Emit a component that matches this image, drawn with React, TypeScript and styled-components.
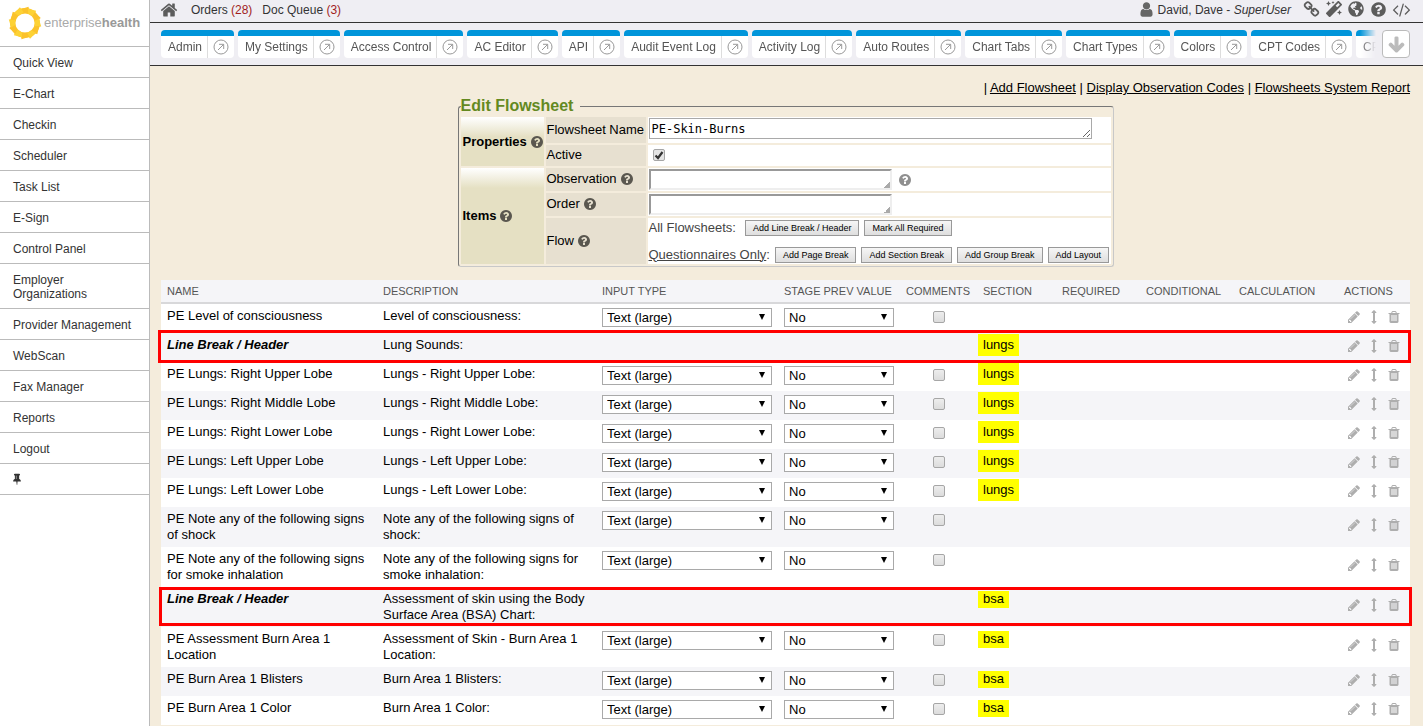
import React from "react";
import styled, { createGlobalStyle, css } from "styled-components";
import { FaMagic, FaGlobeAmericas, FaArrowDown } from "react-icons/fa";

const GlobalStyle = createGlobalStyle`
  *, *::before, *::after { box-sizing: border-box; }
  body {
    margin: 0;
    background: #f4ecdc;
    color: #000;
    font: 13px/16px "Liberation Sans", Arial, Helvetica, sans-serif;
  }
  input, select, textarea, button { margin: 0; font: inherit; color: inherit; }
`;

/* ---------- icons ---------- */

const paths = {
  home: "M1472 992v480q0 26-19 45t-45 19h-384v-384h-256v384h-384q-26 0-45-19t-19-45v-480q0-1 .5-3t.5-3l575-474 575 474q1 2 1 6zm223-69l-62 74q-8 9-21 11h-3q-13 0-21-7l-692-577-692 577q-12 8-24 7-13-2-21-11l-62-74q-8-10-7-23.5t11-21.5l719-599q32-26 76-26t76 26l244 204v-195q0-14 9-23t23-9h192q14 0 23 9t9 23v408l219 182q10 8 11 21.5t-7 23.5z",
  user: "M1536 1399q0 109-62.5 187t-150.5 78h-854q-88 0-150.5-78t-62.5-187q0-85 8.5-160.5t31.5-152 58.5-131 94-89 134.5-34.5q131 128 313 128t313-128q76 0 134.5 34.5t94 89 58.5 131 31.5 152 8.5 160.5zm-256-887q0 159-112.5 271.5t-271.5 112.5-271.5-112.5-112.5-271.5 112.5-271.5 271.5-112.5 271.5 112.5 112.5 271.5z",
  help: "M1024 1376v-192q0-14-9-23t-23-9h-192q-14 0-23 9t-9 23v192q0 14 9 23t23 9h192q14 0 23-9t9-23zm256-672q0-88-55.5-163t-138.5-116-170-41q-243 0-371 213-15 24 8 42l132 100q7 6 19 6 16 0 25-12 53-68 86-92 34-24 86-24 48 0 85.5 26t37.5 59q0 38-20 61t-68 45q-63 28-115.5 86.5t-52.5 125.5v36q0 14 9 23t23 9h192q14 0 23-9t9-23q0-19 21.5-49.5t54.5-49.5q32-18 49-28.5t46-35 44.5-48 28-60.5 12.5-81zm384 192q0 209-103 385.5t-279.5 279.5-385.5 103-385.5-103-279.5-279.5-103-385.5 103-385.5 279.5-279.5 385.5-103 385.5 103 279.5 279.5 103 385.5z",
  pencil: "M491 1536l91-91-235-235-91 91v107h128v128h107zm523-928q0-22-22-22-10 0-17 7l-542 542q-7 7-7 17 0 22 22 22 10 0 17-7l542-542q7-7 7-17zm-54-192l416 416-832 832h-416v-416zm683 96q0 53-37 90l-166 166-416-416 166-165q36-38 90-38 53 0 91 38l235 234q37 39 37 91z",
  move: "M1216 320q0 26-19 45t-45 19h-128v1024h128q26 0 45 19t19 45-19 45l-256 256q-19 19-45 19t-45-19l-256-256q-19-19-19-45t19-45 45-19h128v-1024h-128q-26 0-45-19t-19-45 19-45l256-256q19-19 45-19t45 19l256 256q19 19 19 45z",
  trash: "M704 1376v-704q0-14-9-23t-23-9h-64q-14 0-23 9t-9 23v704q0 14 9 23t23 9h64q14 0 23-9t9-23zm256 0v-704q0-14-9-23t-23-9h-64q-14 0-23 9t-9 23v704q0 14 9 23t23 9h64q14 0 23-9t9-23zm256 0v-704q0-14-9-23t-23-9h-64q-14 0-23 9t-9 23v704q0 14 9 23t23 9h64q14 0 23-9t9-23zm-544-992h448l-48-117q-7-9-17-11h-317q-10 2-17 11zm928 32v64q0 14-9 23t-23 9h-96v948q0 83-47 143.500t-113 60.500h-832q-66 0-113-58.500t-47-141.500v-952h-96q-14 0-23-9t-9-23v-64q0-14 9-23t23-9h309l70-167q15-37 54-63t79-26h320q40 0 79 26t54 63l70 167h309q14 0 23 9t9 23z",
  pin: "M800 864v-448q0-14-9-23t-23-9-23 9-9 23v448q0 14 9 23t23 9 23-9 9-23zm672 352q0 26-19 45t-45 19h-429l-51 483q-2 12-10.500 20.500t-20.500 8.500h-1q-27 0-32-27l-76-485h-404q-26 0-45-19t-19-45q0-123 78.500-221.500t177.500-98.500v-512q-52 0-90-38t-38-90 38-90 90-38h640q52 0 90 38t38 90-38 90-90 38v512q99 0 177.500 98.500t78.500 221.500z",
  link: "M1520 1216q0-40-28-68l-208-208q-28-28-68-28-42 0-72 32 3 3 19 18.500t21.500 21.500 15 19 13 25.500 3.500 27.500q0 40-28 68t-68 28q-15 0-27.500-3.500t-25.500-13-19-15-21.500-21.500-18.500-19q-33 31-33 73 0 40 28 68l206 207q27 27 68 27 40 0 68-26l147-146q28-28 28-67zm-703-705q0-40-28-68l-206-207q-28-28-68-28-39 0-68 27l-147 146q-28 28-28 67 0 40 28 68l208 208q27 27 68 27 42 0 72-31-3-3-19-18.500t-21.500-21.500-15-19-13-25.500-3.500-27.500q0-40 28-68t68-28q15 0 27.500 3.500t25.500 13 19 15 21.500 21.500 18.500 19q33-31 33-73zm895 705q0 120-85 203l-147 146q-83 83-203 83-121 0-204-85l-206-207q-83-83-83-203 0-123 88-209l-88-88q-86 88-208 88-120 0-204-84l-208-208q-84-84-84-204t85-203l147-146q83-83 203-83 121 0 204 85l206 207q83 83 83 203 0 123-88 209l88 88q86-88 208-88 120 0 204 84l208 208q84 84 84 204z",
  code: "M553 1399l-50 50q-10 10-23 10t-23-10l-466-466q-10-10-10-23t10-23l466-466q10-10 23-10t23 10l50 50q10 10 10 23t-10 23l-393 393 393 393q10 10 10 23t-10 23zm591-1067l-373 1291q-4 13-15.500 19.500t-23.500 2.500l-62-17q-13-4-19.500-15.500t-2.500-24.500l373-1291q4-13 15.500-19.500t23.500-2.500l62 17q13 4 19.500 15.500t2.500 24.500zm657 651l-466 466q-10 10-23 10t-23-10l-50-50q-10-10-10-23t10-23l393-393-393-393q-10-10-10-23t10-23l50-50q10-10 23-10t23 10l466 466q10 10 10 23t-10 23z",
};

const IconSvg = styled.svg`
  display: block;
  flex: none;
  overflow: visible;
  fill: currentColor;
`;

function Icon({ name, size = 14 }: { name: keyof typeof paths; size?: number }) {
  return (
    <IconSvg width={size} height={size} viewBox="0 0 1792 1792" aria-hidden="true">
      <path d={paths[name]} />
    </IconSvg>
  );
}

function OpenIcon() {
  return (
    <svg width="16" height="16" viewBox="0 0 16 16" fill="none" stroke="#999" aria-hidden="true">
      <circle cx="8" cy="8" r="7" />
      <path d="M5 11l5.500-5.500M6 5.300h4.700V10" />
    </svg>
  );
}

function SunLogo() {
  const blades = Array.from({ length: 12 }, (_, i) => i * 30);
  return (
    <svg width="34" height="34" viewBox="-17 -17 34 34" aria-hidden="true">
      <circle r="12.300" fill="none" stroke="#fcc92f" strokeWidth="5.400" />
      {blades.map((a) => (
        <path key={a} transform={`rotate(${a})`} d="M-4.500 -13.800L3.500 -16.200L4.300 -10L-2 -9.800Z" fill={a % 60 ? "#fdd235" : "#fbc22b"} />
      ))}
    </svg>
  );
}

/* ---------- shell ---------- */

const Shell = styled.div`
  display: flex;
  min-height: 100vh;
`;

const Sidebar = styled.nav`
  flex: none;
  width: 150px;
  background: #fff;
  border-right: 1px solid #bbb;
  color: #333;
  font-size: 12px;
  line-height: 14px;
`;

const Brand = styled.a`
  display: flex;
  align-items: center;
  gap: 2px;
  height: 47px;
  padding: 0 0 1px 8px;
  border-bottom: 1px solid #bbb;
  color: #a9a9a9;
  font-size: 13px;
  text-decoration: none;

  strong { color: #999; }
`;

const SideLink = styled.a`
  display: block;
  padding: 9px 50px 7px 13px;
  border-bottom: 1px solid #bbb;
  color: inherit;
  text-decoration: none;
  white-space: ${(p: { $wrap?: boolean }) => (p.$wrap ? "normal" : "nowrap")};
`;

const PinButton = styled.button`
  display: block;
  width: 100%;
  height: 31px;
  padding: 0 0 0 11px;
  border: 0;
  border-bottom: 1px solid #bbb;
  background: none;
`;

const Main = styled.div`
  flex: 1;
  min-width: 0;
`;

const TopBar = styled.header`
  display: flex;
  align-items: center;
  height: 23px;
  padding: 0 13px 3px 10px;
  border-bottom: 1px solid #333;
  background: #efeef3;
  color: #333;
  font-size: 12px;
`;

const TopLink = styled.a`
  margin-left: 10px;
  color: inherit;
  text-decoration: none;

  span { color: #a11d1d; }
  &:first-child { margin: 0 3px 0 0; color: #5c5c5c; }
`;

const UserName = styled.span`
  display: flex;
  align-items: center;
  gap: 3px;
  margin: 0 12px 0 auto;

  svg { color: #666; }
`;

const Tools = styled.div`
  display: flex;
  gap: 6px;
`;

const ToolButton = styled.button`
  display: flex;
  padding: 0;
  border: 0;
  background: none;
  color: #5c5c5c;
`;

const TabBar = styled.div`
  display: flex;
  align-items: center;
  gap: 6px;
  height: 43px;
  padding: 0 13px 0 11px;
  border-bottom: 1px solid #333;
  background: #efeef3;
`;

const TabStrip = styled.div`
  display: flex;
  flex: 1;
  gap: 4px;
  min-width: 0;
  overflow: hidden;
  mask-image: linear-gradient(to right, #000 calc(100% - 16px), transparent);
`;

const Tab = styled.div`
  display: flex;
  flex: none;
  height: 28px;
  border-top: 6px solid #0095da;
  border-radius: 4px;
  background: #fff;
  color: #555;
  font-size: 12px;
  line-height: 22px;

  a { color: inherit; text-decoration: none; }
`;

const TabLabel = styled.a`
  padding: 0 5px 0 7px;
`;

const TabOpen = styled.a`
  display: flex;
  align-items: center;
  justify-content: center;
  width: 27px;
  border-left: 1px solid #ddd;
`;

const MoreButton = styled.button`
  display: flex;
  flex: none;
  align-items: center;
  justify-content: center;
  width: 28px;
  height: 28px;
  padding: 0;
  border: 1px solid #bbb;
  border-radius: 4px;
  background: #fff;
  color: #bbb;

  svg { stroke: currentColor; stroke-width: 40px; }
`;

const Content = styled.main`
  padding: 14px 13px 0 11px;
`;

const PageLinks = styled.div`
  text-align: right;

  a { color: inherit; }
`;

/* ---------- edit form ---------- */

const EditBox = styled.fieldset`
  width: fit-content;
  margin: 2px auto 13px;
  padding: 0 2px 2px;
  border: 1px solid;
  border-color: #777 #c8c8c8 #c8c8c8 #777;
  border-radius: 3px;

  legend {
    padding: 0 7px 0 0;
    color: #63891f;
    font-size: 16px;
    font-weight: bold;
    line-height: 16px;
  }
`;

const FormGrid = styled.div`
  display: grid;
  grid-template-columns: 83px 100px 463px;
  grid-template-rows: 26px 21px 23px 23px 46px;
  gap: 2px;
  padding-top: 3px;
`;

const cell = css`
  display: flex;
  align-items: center;
  gap: 3px;
  white-space: nowrap;
`;

const GroupCell = styled.div<{ $rows: number }>`
  ${cell}
  grid-row: span ${(p) => p.$rows};
  padding-left: 2px;
  background: linear-gradient(#fff, #e5e0c3 20px);
  font-weight: bold;
`;

const LabelCell = styled.label`
  ${cell}
  padding: 0 0 1px 1px;
  background: #e7e0d0;
`;

const ValueCell = styled.div<{ $top?: boolean }>`
  ${cell}
  align-items: ${(p) => (p.$top ? "flex-start" : "center")};
  gap: 6px;
  padding: ${(p) => (p.$top ? "1px 0 0 1px" : "0 0 0 1px")};
  background: #fff;
`;

const FlowCell = styled.div`
  display: flex;
  flex-direction: column;
  justify-content: space-between;
  padding-left: 1px;
  background: #fff;
  color: #444;
`;

const FlowLine = styled.div<{ $wide?: boolean }>`
  display: flex;
  align-items: center;
  gap: 5px;
  height: 19px;
  white-space: nowrap;

  & > span { margin-right: ${(p) => (p.$wide ? "4px" : "0")}; }
`;

const HelpButton = styled.button<{ $light?: boolean }>`
  display: flex;
  padding: 0;
  border: 0;
  background: none;
  color: ${(p) => (p.$light ? "#8f8f8f" : "#5a574f")};
`;

const NameArea = styled.textarea`
  display: block;
  width: 443px;
  height: 21px;
  padding: 2px;
  overflow: hidden;
  border: 1px solid #a9a9a9;
  background: #fff;
  font: 12px/17px "DejaVu Sans Mono", monospace;
`;

const SearchArea = styled.textarea`
  display: block;
  width: 243px;
  height: 21px;
  padding: 1px;
  overflow: hidden;
  border: 2px solid;
  border-color: #999 #eee #eee #999;
  background: linear-gradient(135deg, transparent 50%, #aaa 50%) right bottom / 6px 6px no-repeat #fff;
  resize: none;
`;

const SmallButton = styled.button`
  height: 16px;
  padding: 0 7px;
  border: 1px solid #999;
  background: linear-gradient(#f6f6f6, #dedede);
  color: #000;
  font-size: 9px;
  line-height: 12px;
`;

const Check = styled.input.attrs({ type: "checkbox" })`
  appearance: none;
  display: block;
  width: 12px;
  height: 12px;
  border: 1px solid #a6a6a6;
  border-radius: 2px;
  background: linear-gradient(#ededed, #dcdcdc);

  &:checked {
    background: url("data:image/svg+xml,%3Csvg xmlns='http://www.w3.org/2000/svg' viewBox='0 0 10 10'%3E%3Cpath d='M1.500 5.500L4 8L8.500 2' fill='none' stroke='%23333' stroke-width='2.200'/%3E%3C/svg%3E") center / 10px no-repeat #e4e4e4;
  }
`;

const ActiveCell = styled(ValueCell)`
  padding: 0 0 1px 5px;
`;

/* ---------- flowsheet table ---------- */

const Sheet = styled.table`
  width: 100%;
  table-layout: fixed;
  border-collapse: separate;
  border-spacing: 0;
  background: #fff;

  th {
    height: 24px;
    padding: 0 6px;
    border-bottom: 2px solid #d8d8da;
    background: #f5f5f8;
    color: #555;
    font-size: 11px;
    font-weight: normal;
    text-align: left;
    white-space: nowrap;
  }

  td {
    height: 29px;
    padding: 4px 6px;
    vertical-align: top;
  }

  tbody tr:nth-child(even) { background: #f5f5f8; }
`;

const Row = styled.tr<{ $boxed?: "above" | "within" }>`
  position: relative;

  ${(p) =>
    p.$boxed &&
    css`
      &::after {
        content: "";
        position: absolute;
        inset: ${p.$boxed === "above" ? "-3px -1px -1px -3px" : "0 -2px 1px -2px"};
        border: 3px solid #f00;
        pointer-events: none;
      }
    `}
`;

const BreakName = styled.td`
  font-weight: bold;
  font-style: italic;
`;

const SelectWrap = styled.span`
  position: relative;
  display: block;

  &::after {
    content: "";
    position: absolute;
    top: 6px;
    right: 7px;
    border: solid transparent;
    border-width: 6px 3px 0;
    border-top-color: #000;
    pointer-events: none;
  }
`;

const Select = styled.select`
  appearance: none;
  display: block;
  width: 100%;
  height: 19px;
  padding: 0 4px;
  border: 1px solid #a9a9a9;
  border-radius: 0;
  background: #fff;
  line-height: 17px;
`;

const CheckCell = styled.td`
  && { padding: 7px 0 0 33px; }
`;

const Section = styled.span<{ $tall: boolean }>`
  display: block;
  width: fit-content;
  margin: ${(p) => (p.$tall ? "-3px 0 -3px -5px" : "0 0 -1px -5px")};
  padding: ${(p) => (p.$tall ? "3px 5px" : "0 5px 1px")};
  background: #ff0;
`;

const ActionCell = styled.td`
  && {
    padding: 0 0 4px 9px;
    vertical-align: middle;
  }
`;

const Actions = styled.div`
  display: flex;
  gap: 6px;
`;

const ActionButton = styled.button`
  display: flex;
  padding: 0;
  border: 0;
  background: none;
  color: #aeaeae;
`;

/* ---------- data ---------- */

const sideLinks = [
  "Quick View", "E-Chart", "Checkin", "Scheduler", "Task List", "E-Sign", "Control Panel",
  "Employer Organizations", "Provider Management", "WebScan", "Fax Manager", "Reports", "Logout",
];

const tabs = [
  "Admin", "My Settings", "Access Control", "AC Editor", "API", "Audit Event Log", "Activity Log",
  "Auto Routes", "Chart Tabs", "Chart Types", "Colors", "CPT Codes", "CP",
];

const columns: [string, number][] = [
  ["NAME", 216], ["DESCRIPTION", 219], ["INPUT TYPE", 182], ["STAGE PREV VALUE", 122], ["COMMENTS", 77],
  ["SECTION", 79], ["REQUIRED", 84], ["CONDITIONAL", 93], ["CALCULATION", 105], ["ACTIONS", 72],
];

type Item = { name: string; text: string; section?: string; boxed?: "above" | "within" };

const items: Item[] = [
  { name: "PE Level of consciousness", text: "Level of consciousness:" },
  { name: "Line Break / Header", text: "Lung Sounds:", section: "lungs", boxed: "above" },
  { name: "PE Lungs: Right Upper Lobe", text: "Lungs - Right Upper Lobe:", section: "lungs" },
  { name: "PE Lungs: Right Middle Lobe", text: "Lungs - Right Middle Lobe:", section: "lungs" },
  { name: "PE Lungs: Right Lower Lobe", text: "Lungs - Right Lower Lobe:", section: "lungs" },
  { name: "PE Lungs: Left Upper Lobe", text: "Lungs - Left Upper Lobe:", section: "lungs" },
  { name: "PE Lungs: Left Lower Lobe", text: "Lungs - Left Lower Lobe:", section: "lungs" },
  { name: "PE Note any of the following signs of shock", text: "Note any of the following signs of shock:" },
  { name: "PE Note any of the following signs for smoke inhalation", text: "Note any of the following signs for smoke inhalation:" },
  { name: "Line Break / Header", text: "Assessment of skin using the Body Surface Area (BSA) Chart:", section: "bsa", boxed: "within" },
  { name: "PE Assessment Burn Area 1 Location", text: "Assessment of Skin - Burn Area 1 Location:", section: "bsa" },
  { name: "PE Burn Area 1 Blisters", text: "Burn Area 1 Blisters:", section: "bsa" },
  { name: "PE Burn Area 1 Color", text: "Burn Area 1 Color:", section: "bsa" },
];

function Help({ light }: { light?: boolean }) {
  return (
    <HelpButton type="button" $light={light} aria-label="Help">
      <Icon name="help" />
    </HelpButton>
  );
}

function ItemRow({ item }: { item: Item }) {
  return (
    <Row $boxed={item.boxed}>
      {item.boxed ? <BreakName>{item.name}</BreakName> : <td>{item.name}</td>}
      <td>{item.text}</td>
      {item.boxed ? (
        <>
          <td />
          <td />
          <td />
        </>
      ) : (
        <>
          <td>
            <SelectWrap>
              <Select aria-label="Input type" defaultValue="large">
                <option value="large">Text (large)</option>
              </Select>
            </SelectWrap>
          </td>
          <td>
            <SelectWrap>
              <Select aria-label="Stage previous value" defaultValue="no">
                <option value="no">No</option>
                <option value="yes">Yes</option>
              </Select>
            </SelectWrap>
          </td>
          <CheckCell>
            <Check aria-label="Comments" />
          </CheckCell>
        </>
      )}
      <td>{item.section && <Section $tall={item.section === "lungs"}>{item.section}</Section>}</td>
      <td />
      <td />
      <td />
      <ActionCell>
        <Actions>
          <ActionButton type="button" aria-label="Edit"><Icon name="pencil" /></ActionButton>
          <ActionButton type="button" aria-label="Move"><Icon name="move" /></ActionButton>
          <ActionButton type="button" aria-label="Delete"><Icon name="trash" /></ActionButton>
        </Actions>
      </ActionCell>
    </Row>
  );
}

export default function App() {
  return (
    <Shell>
      <GlobalStyle />
      <Sidebar>
        <Brand href="#">
          <SunLogo />
          <span>enterprise<strong>health</strong></span>
        </Brand>
        {sideLinks.map((label) => (
          <SideLink key={label} href="#" $wrap={label.startsWith("Employer")}>{label}</SideLink>
        ))}
        <PinButton type="button" aria-label="Pin menu"><Icon name="pin" size={12} /></PinButton>
      </Sidebar>

      <Main>
        <TopBar>
          <TopLink href="#" aria-label="Home"><Icon name="home" size={18} /></TopLink>
          <TopLink href="#">Orders <span>(28)</span></TopLink>
          <TopLink href="#">Doc Queue <span>(3)</span></TopLink>
          <UserName>
            <Icon name="user" size={17} />
            <span>David, Dave - <em>SuperUser</em></span>
          </UserName>
          <Tools>
            <ToolButton type="button" aria-label="Links"><Icon name="link" size={17} /></ToolButton>
            <ToolButton type="button" aria-label="Wizard"><FaMagic size={16} /></ToolButton>
            <ToolButton type="button" aria-label="Web"><FaGlobeAmericas size={16} /></ToolButton>
            <ToolButton type="button" aria-label="Help"><Icon name="help" size={17} /></ToolButton>
            <ToolButton type="button" aria-label="Source"><Icon name="code" size={17} /></ToolButton>
          </Tools>
        </TopBar>

        <TabBar>
          <TabStrip>
            {tabs.map((label) => (
              <Tab key={label}>
                <TabLabel href="#">{label}</TabLabel>
                <TabOpen href="#" aria-label={`Open ${label}`}><OpenIcon /></TabOpen>
              </Tab>
            ))}
          </TabStrip>
          <MoreButton type="button" aria-label="More tabs"><FaArrowDown size={17} /></MoreButton>
        </TabBar>

        <Content>
          <PageLinks>
            | <a href="#">Add Flowsheet</a> | <a href="#">Display Observation Codes</a> | <a href="#">Flowsheets System Report</a>
          </PageLinks>

          <EditBox>
            <legend>Edit Flowsheet</legend>
            <FormGrid>
              <GroupCell $rows={2}>Properties <Help /></GroupCell>
              <LabelCell htmlFor="name">Flowsheet Name</LabelCell>
              <ValueCell $top><NameArea id="name" defaultValue="PE-Skin-Burns" /></ValueCell>
              <LabelCell htmlFor="active">Active</LabelCell>
              <ActiveCell><Check id="active" defaultChecked /></ActiveCell>

              <GroupCell $rows={3}>Items <Help /></GroupCell>
              <LabelCell htmlFor="observation">Observation <Help /></LabelCell>
              <ValueCell><SearchArea id="observation" /><Help light /></ValueCell>
              <LabelCell htmlFor="order">Order <Help /></LabelCell>
              <ValueCell><SearchArea id="order" /></ValueCell>
              <LabelCell as="div">Flow <Help /></LabelCell>
              <FlowCell>
                <FlowLine $wide>
                  <span>All Flowsheets:</span>
                  <SmallButton type="button">Add Line Break / Header</SmallButton>
                  <SmallButton type="button">Mark All Required</SmallButton>
                </FlowLine>
                <FlowLine>
                  <span><u>Questionnaires Only</u>:</span>
                  <SmallButton type="button">Add Page Break</SmallButton>
                  <SmallButton type="button">Add Section Break</SmallButton>
                  <SmallButton type="button">Add Group Break</SmallButton>
                  <SmallButton type="button">Add Layout</SmallButton>
                </FlowLine>
              </FlowCell>
            </FormGrid>
          </EditBox>

          <Sheet>
            <colgroup>
              {columns.map(([label, width]) => <col key={label} width={width} />)}
            </colgroup>
            <thead>
              <tr>{columns.map(([label]) => <th key={label} scope="col">{label}</th>)}</tr>
            </thead>
            <tbody>
              {items.map((item) => <ItemRow key={item.text} item={item} />)}
            </tbody>
          </Sheet>
        </Content>
      </Main>
    </Shell>
  );
}
